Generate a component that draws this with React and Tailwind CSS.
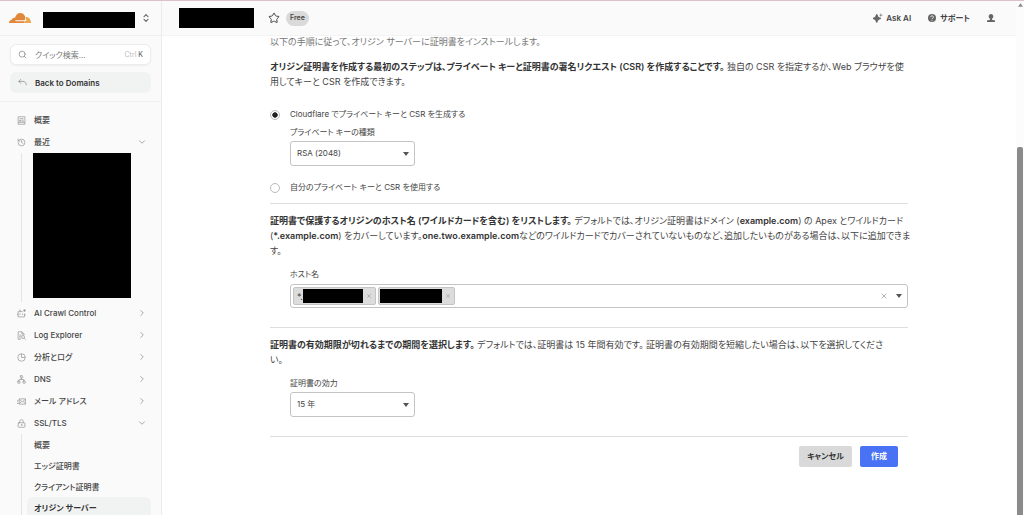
import React, { useState } from "react";
import {
  ChevronDown,
  ChevronRight,
  ChevronsUpDown,
  History,
  LockKeyhole,
  Network,
  Search,
  Star,
  X,
} from "lucide-react";

const sslItems = ["概要", "エッジ証明書", "クライアント証明書", "オリジン サーバー"];

function Logo() {
  return (
    <svg viewBox="0 0 66 30" className="w-[22px] h-[10px] shrink-0">
      <path
        d="M0 30c0-6 3-10 9-10 0-4 5-7 9-5C20 6 26 0 33 0c8 0 14 5 16 12l-1 9-2 9z"
        fill="#e0873a"
      />
      <path d="M50 12c9-1 16 7 16 18H46z" fill="#eba64e" />
      <path d="M18 22h29l8-2-7 5H20zM50 12l-3 10 4-1z" fill="#fafafa" />
    </svg>
  );
}

function Overview({ className }) {
  return (
    <svg viewBox="0 0 24 24" className={className} fill="none" stroke="currentColor" strokeWidth="2">
      <path d="M3 2h18v20H3zM7 7h10M3 17h18M7 11h4v3H7zM14 11h4M14 14h4" />
    </svg>
  );
}

function Crawl({ className }) {
  return (
    <svg viewBox="0 0 24 24" className={className} fill="none" stroke="currentColor" strokeWidth="2">
      <path d="M15 7H3v14h17v-9M1 12v5M22 14v3M8 12v4M15 12v4M9 7V3H6" />
      <path d="M20 0l1 3 3 1-3 1-1 3-1-3-3-1 3-1z" fill="currentColor" strokeWidth="1" />
    </svg>
  );
}

function LogExplorer({ className }) {
  return (
    <svg viewBox="0 0 24 24" className={className} fill="none" stroke="currentColor" strokeWidth="2">
      <path d="M10 22H3V2h10l6 6v3M13 2v6h6M6 11h6M6 15h4M6 19h4" />
      <circle cx="16" cy="16" r="4" />
      <path d="M19 19l4 4" />
    </svg>
  );
}

function Analytics({ className }) {
  return (
    <svg viewBox="0 0 24 24" className={className} fill="none" stroke="currentColor" strokeWidth="2">
      <circle cx="12" cy="12" r="10" />
      <path d="M12 2v10h10" />
    </svg>
  );
}

function Mail({ className }) {
  return (
    <svg viewBox="0 0 24 24" className={className} fill="none" stroke="currentColor" strokeWidth="2">
      <path d="M6 5h17v14H6zM6 6l8 7 9-7M6 18l6-6M23 18l-6-6M0 9h4M1 13h3M0 17h4" />
    </svg>
  );
}

function Sparkle() {
  return (
    <svg viewBox="0 0 24 24" className="w-[10px] h-[10px]" fill="#666">
      <path d="M9 4c1 6 3 8 9 9-6 1-8 3-9 9-1-6-3-8-9-9 6-1 8-3 9-9z" stroke="#666" strokeWidth="3" strokeLinejoin="round" />
      <path d="M19 0l1 4 4 1-4 1-1 4-1-4-4-1 4-1z" />
    </svg>
  );
}

function Help() {
  return (
    <svg viewBox="0 0 24 24" className="w-2 h-2">
      <circle cx="12" cy="12" r="12" fill="#666" />
      <path d="M8 9.500a4 4 0 1 1 6 3.300c-1.500.9-2 1.400-2 2.700" fill="none" stroke="#fff" strokeWidth="2.500" />
      <circle cx="12" cy="18.500" r="1.600" fill="#fff" />
    </svg>
  );
}

function User() {
  return (
    <svg viewBox="0 0 24 24" className="w-2 h-2" fill="#666">
      <path d="M12 0c4 0 7 3 7 7 0 3-1.500 6-4 7.500V17l9 2.500V24H0v-4.500L9 17v-2.500C6.500 13 5 10 5 7c0-4 3-7 7-7z" />
    </svg>
  );
}

function BackArrow() {
  return (
    <svg viewBox="0 0 24 24" className="w-[9px] h-[9px]" fill="none" stroke="#888" strokeWidth="2">
      <path d="M8 3L2 9l6 6M2 9h11c6 0 9 4 9 10" />
    </svg>
  );
}

function Caret({ className }) {
  return (
    <svg viewBox="0 0 6 4" className={className} fill="#555">
      <path d="M0 0h6L3 4z" />
    </svg>
  );
}

const navItems = [
  { icon: Crawl, label: "AI Crawl Control" },
  { icon: LogExplorer, label: "Log Explorer" },
  { icon: Analytics, label: "分析とログ" },
  { icon: Network, label: "DNS" },
  { icon: Mail, label: "メール アドレス" },
  { icon: LockKeyhole, label: "SSL/TLS", open: true },
];

function NavItem({ icon: Icon, label, open }) {
  const Chevron = open ? ChevronDown : ChevronRight;
  return (
    <a href="#" className="flex items-center h-[22px] pl-[17px] pr-3.5 text-[#444] font-medium">
      <Icon className="w-[9px] h-[9px] mr-2 text-[#999]" />
      <span className="flex-1">{label}</span>
      {open !== null && <Chevron className="w-[10px] h-[10px] text-[#999]" strokeWidth={2} />}
    </a>
  );
}

function Sidebar() {
  return (
    <aside className="w-[162px] shrink-0 bg-[#fafafa] border-r border-[#ececec] text-[8px] overflow-hidden">
      <div className="h-[35px] flex items-center pl-[9px] border-b border-[#efefef]">
        <Logo />
        <div className="w-[92px] h-4 mt-1 ml-3 bg-black" />
        <button type="button" aria-label="アカウントを切り替え" className="ml-1.5">
          <ChevronsUpDown className="w-[10px] h-[10px] text-[#555]" strokeWidth={2.5} />
        </button>
      </div>

      <div className="px-2.5 pt-2 pb-2 border-b border-[#efefef]">
        <label className="flex items-center h-[21px] px-[7px] rounded-md bg-white border border-[#ececec] shadow-xs">
          <Search className="w-[9px] h-[9px] shrink-0 text-[#888]" />
          <input
            type="text"
            aria-label="クイック検索"
            placeholder="クイック検索..."
            className="flex-1 min-w-0 ml-2 outline-none placeholder:text-[#777]"
          />
          <span className="text-[7px] leading-3 text-[#bbb]">
            Ctrl <span className="text-[#555]">K</span>
          </span>
        </label>
        <a
          href="#"
          className="flex items-center h-[21px] mt-[7px] px-2 gap-2 rounded-md bg-[#f1f3f3] text-[#333] font-semibold"
        >
          <BackArrow />
          Back to Domains
        </a>
      </div>

      <nav className="pt-[7px]">
        <NavItem icon={Overview} label="概要" open={null} />
        <NavItem icon={History} label="最近" open />
        <div className="ml-[21px] pl-[11px] pb-1 border-l border-[#e4e4e4]">
          <div className="w-[98px] h-[145px] bg-black" />
        </div>
        {navItems.map((item) => (
          <NavItem key={item.label} {...item} />
        ))}
        <div className="ml-[21px] mr-2.5 pl-[5px] border-l border-[#e4e4e4]">
          {sslItems.map((label) => (
            <a
              key={label}
              href="#"
              className={
                label === "オリジン サーバー"
                  ? "flex items-center h-[21px] pl-[7px] rounded-md bg-[#f1f3f3] text-[#333] font-semibold"
                  : "flex items-center h-[21px] pl-[7px] text-[#444] font-medium"
              }
            >
              {label}
            </a>
          ))}
        </div>
      </nav>
    </aside>
  );
}

function Header() {
  return (
    <header className="h-[35px] shrink-0 flex items-center pl-[17px] pr-[21px] bg-[#fafafa] border-b border-[#f3f3f3] text-[8px] font-semibold text-[#444]">
      <div className="w-[75px] h-5 bg-black" />
      <button type="button" aria-label="お気に入り" className="ml-3.5">
        <Star className="w-3 h-3 text-[#444]" strokeWidth={2} />
      </button>
      <span className="ml-1.5 px-1 h-[15px] flex items-center rounded-full bg-[#dadada] text-[7px]">Free</span>
      <div className="flex-1" />
      <button type="button" className="flex items-center gap-[3px]">
        <Sparkle />
        Ask AI
      </button>
      <button type="button" className="flex items-center gap-1 ml-[17px]">
        <Help />
        サポート
      </button>
      <button type="button" aria-label="アカウント" className="ml-[17px]">
        <User />
      </button>
    </header>
  );
}

function SelectField({ id, label, options }) {
  return (
    <div className="pl-5">
      <label htmlFor={id} className="block text-[8px] leading-[15px]">
        {label}
      </label>
      <div className="grid items-center w-[125px] mt-px">
        <select
          id={id}
          className="col-start-1 row-start-1 appearance-none h-[25px] pl-1.5 text-[8px] bg-white border border-[#c4c4c4] rounded-[3px]"
        >
          {options.map((o) => (
            <option key={o}>{o}</option>
          ))}
        </select>
        <Caret className="col-start-1 row-start-1 justify-self-end w-1.5 h-1 mr-1.5 pointer-events-none" />
      </div>
    </div>
  );
}

function Radio({ value, checked, onChange, children }) {
  return (
    <label className="flex items-center gap-2.5 h-[15px] text-[8px]">
      <input
        type="radio"
        name="csr"
        value={value}
        checked={checked}
        onChange={() => onChange(value)}
        className="appearance-none w-2.5 h-2.5 rounded-full border border-[#bbb] bg-white checked:bg-[radial-gradient(circle_closest-side,#222_60%,#fff_75%)]"
      />
      {children}
    </label>
  );
}

function HostTag({ prefix, width }) {
  return (
    <span
      className={
        prefix
          ? "flex items-center h-[18px] pl-[3px] bg-[#dcdcdc] border border-[#c4c4c4] rounded-xs"
          : "flex items-center h-[18px] pl-px bg-[#dcdcdc] border border-[#c4c4c4] rounded-xs"
      }
    >
      {prefix}
      <span className={`${width} h-[14px] bg-black`} />
      <button type="button" aria-label="削除" className="px-[3px]">
        <X className="w-1.5 h-1.5 text-[#888]" />
      </button>
    </span>
  );
}

export default function App() {
  const [csr, setCsr] = useState("generate");

  return (
    <div
      lang="ja"
      className="h-screen flex flex-col overflow-hidden bg-white text-[#444] font-['Inter','Noto_Sans_CJK_JP',sans-serif] [font-feature-settings:'palt']"
    >
      <div className="h-px shrink-0 bg-[#d9c3c9]" />
      <div className="flex flex-1 min-h-0">
        <Sidebar />
        <div className="flex-1 min-w-0 flex flex-col">
          <Header />
          <main className="flex-1 min-h-0 overflow-hidden">
            <form
              onSubmit={(e) => e.preventDefault()}
              className="max-w-[638px] mx-auto -mt-0.5 text-[9px] leading-[15px] [&_strong]:text-[#333] [&_strong]:font-semibold"
            >
              <p className="text-[#777]">以下の手順に従って、オリジン サーバーに証明書をインストールします。</p>
              <p className="mt-2.5">
                <strong>
                  オリジン証明書を作成する最初のステップは、プライベート キーと証明書の署名リクエスト (CSR) を作成することです。
                </strong>{" "}
                独自の CSR を指定するか、Web ブラウザを使用してキーと CSR を作成できます。
              </p>

              <div className="mt-[18px]">
                <Radio value="generate" checked={csr === "generate"} onChange={setCsr}>
                  Cloudflare でプライベート キーと CSR を生成する
                </Radio>
                <div className="mt-[3px] mb-3.5">
                  <SelectField id="key-type" label="プライベート キーの種類" options={["RSA (2048)", "ECC"]} />
                </div>
                <Radio value="own" checked={csr === "own"} onChange={setCsr}>
                  自分のプライベート キーと CSR を使用する
                </Radio>
              </div>

              <section className="mt-2 pt-[9px] border-t border-[#dedede]">
                <p className="-mr-2.5">
                  <strong>証明書で保護するオリジンのホスト名 (ワイルドカードを含む) をリストします。</strong>{" "}
                  デフォルトでは、オリジン証明書はドメイン (<strong>example.com</strong>) の Apex とワイルドカード
                  (<strong>*.example.com</strong>) をカバーしています。<strong>one.two.example.com</strong>
                  などのワイルドカードでカバーされていないものなど、追加したいものがある場合は、以下に追加できま
                  <br />
                  す。
                </p>
                <div className="pl-5 mt-[9px]">
                  <label htmlFor="hosts" className="block text-[8px]">
                    ホスト名
                  </label>
                  <div className="flex items-center gap-0.5 h-6 mt-0.5 pl-0.5 pr-[5px] border border-[#c4c4c4] rounded-[3px]">
                    <HostTag prefix="*." width="w-[60px]" />
                    <HostTag width="w-[62px]" />
                    <input id="hosts" type="text" className="flex-1 min-w-0 outline-none" />
                    <button type="button" aria-label="すべて消去">
                      <X className="w-2 h-2 text-[#888]" />
                    </button>
                    <button type="button" aria-label="開く" className="ml-1.5">
                      <Caret className="w-1.5 h-1" />
                    </button>
                  </div>
                </div>
              </section>

              <section className="mt-[19px] pt-[9px] border-t border-[#dedede]">
                <p className="mb-[9px]">
                  <strong>証明書の有効期限が切れるまでの期間を選択します。</strong>{" "}
                  デフォルトでは、証明書は 15 年間有効です。 証明書の有効期間を短縮したい場合は、以下を選択してくださ
                  <br />
                  い。
                </p>
                <SelectField id="validity" label="証明書の効力" options={["15 年", "10 年", "5 年", "1 年"]} />
              </section>

              <div className="flex justify-end gap-2 mt-[19px] pt-[9px] pr-2.5 border-t border-[#dedede] text-[8px] font-semibold">
                <button type="button" className="h-[21px] px-2 rounded-xs bg-[#d9d9d9] text-[#333]">
                  キャンセル
                </button>
                <button type="submit" className="h-[21px] px-[11px] rounded-xs bg-[#4a72f5] text-white">
                  作成
                </button>
              </div>
            </form>
          </main>
        </div>
        <div className="w-2 shrink-0 flex flex-col items-center bg-[#fcfcfc]">
          <svg viewBox="0 0 6 4" className="w-[5px] h-1 mt-0.5" fill="#888">
            <path d="M0 4h6L3 0z" />
          </svg>
          <div className="flex-1 w-1.5 mt-[140px] rounded-t-xs bg-[#8b8b8b]" />
        </div>
      </div>
    </div>
  );
}
